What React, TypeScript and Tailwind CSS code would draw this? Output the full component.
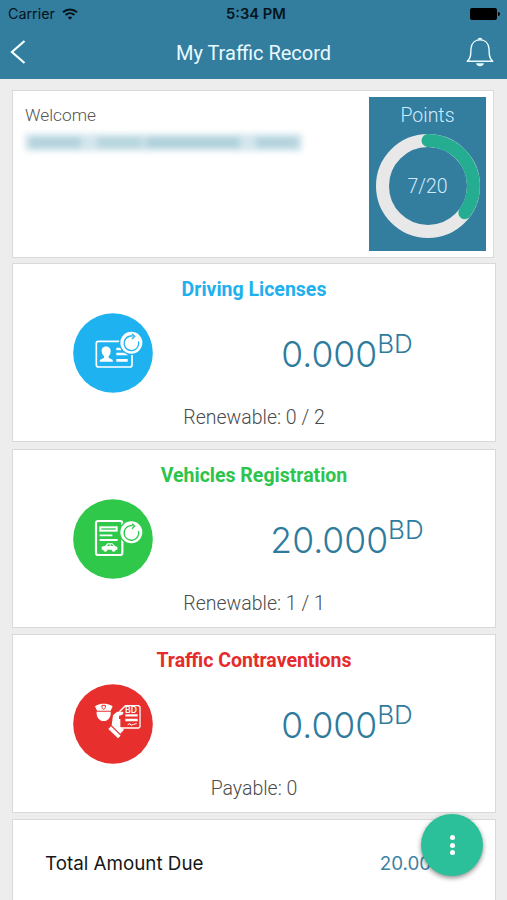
import type { ReactNode } from "react";

type RecordCardProps = {
  title: string;
  titleClass: string;
  amount: string;
  footer: string;
  className?: string;
  icon: ReactNode;
};

function WifiIcon() {
  return (
    <svg viewBox="0 0 16 12" className="ml-[7px] h-3 w-4" fill="none" stroke="#06141c" strokeWidth="2">
      <path d="M1 4.2C5 .5 11 .5 15 4.2" />
      <path d="M3.6 7C6.2 4.7 9.8 4.7 12.4 7" />
      <path d="M8 11.8 5.7 9.2C7 8.1 9 8.1 10.3 9.2Z" fill="#06141c" stroke="none" />
    </svg>
  );
}

function BellIcon() {
  return (
    <svg viewBox="0 0 28 30" className="h-[30px] w-7" fill="none" stroke="#e8fbff" strokeWidth="1.4">
      <path d="M1.2 24.3C5.4 21 4.6 17 5 11.6C5.4 6.2 9 2.7 14 2.7S22.6 6.2 23 11.6C23.4 17 22.6 21 26.8 24.3Z" strokeLinejoin="round" />
      <path d="M12.4 2.4a1.7 1.4 0 0 1 3.2 0" />
      <path d="M10 26.2H18C17.4 30.2 10.6 30.2 10 26.2Z" fill="#e8fbff" stroke="none" />
    </svg>
  );
}

// round arrow badge shared by the renewable cards
function RenewBadge({ color, y }: { color: string; y: number }) {
  return (
    <g transform={`translate(215 ${y})`}>
      <circle r="37" fill={color} />
      <circle r="33" fill="#fff" />
      <path d="M21.5 -4A22 22 0 1 1 -3 -20H4" fill="none" stroke={color} strokeWidth="4" />
      <path d="M2 -26 10 -19 2 -11" fill="none" stroke={color} strokeWidth="4" />
    </g>
  );
}

function LicenseIcon() {
  return (
    <svg viewBox="40 38 240 240" className="size-20">
      <circle cx="160" cy="158" r="119.5" fill="#1fb2f0" />
      <rect x="110" y="123" width="107" height="77" rx="6" fill="none" stroke="#fff" strokeWidth="5" />
      <path d="M126 153C124 134 154 134 153 153C153 160 150 164 147 168V173C153 176 160 176 160 184H120C120 176 128 176 133 173V168C130 164 126 160 126 153Z" fill="#fff" />
      <path d="M170 146H185M170 161H204M170 180H204" stroke="#fff" strokeWidth="8" />
      <RenewBadge color="#1fb2f0" y={127} />
    </svg>
  );
}

function VehicleIcon() {
  return (
    <svg viewBox="40 38 240 240" className="size-20">
      <circle cx="160" cy="158" r="119.5" fill="#2fc84b" />
      <rect x="109" y="104" width="79" height="102" rx="7" fill="none" stroke="#fff" strokeWidth="6.5" />
      <rect x="122" y="123" width="49" height="10" fill="none" stroke="#fff" strokeWidth="6" />
      <path d="M120 147H158M120 161H174" stroke="#fff" strokeWidth="5.5" />
      <path d="M126 181 137 178 143 171H158L166 179 173 182V190H168A6 6 0 0 1 156 190H143A6 6 0 0 1 131 190H126Z" fill="#fff" />
      <path d="M142 179 146 174H150V179ZM153 174H157L162 179H153Z" fill="#2fc84b" />
      <RenewBadge color="#2fc84b" y={138} />
    </svg>
  );
}

function ContraventionIcon() {
  return (
    <svg viewBox="39 28 240 240" className="size-20">
      <circle cx="159" cy="148" r="119.5" fill="#e7302d" />
      <path d="M105 95C115 88 123 87 131 87S148 88 158 95L152 108H111Z" fill="#fff" />
      <path d="M110 111H152C154 127 144 139 131 139S108 127 110 111Z" fill="#fff" />
      <path d="M126 92H136V98C136 101 133 103 131 104C128 103 126 101 126 98Z" fill="none" stroke="#e7302d" strokeWidth="3" />
      <path d="M178 111 196 93H236L240 97V156L236 160H179V133" fill="none" stroke="#fff" strokeWidth="4" />
      <text x="195" y="114" fill="#fff" fontSize="26" fontWeight="600" className="font-['Inter',sans-serif]">BD</text>
      <path d="M196 122H233M196 136H233" stroke="#fff" strokeWidth="7" />
      <path d="M203 150 210 147 213 152 220 149 230 147" fill="none" stroke="#fff" strokeWidth="3" />
      <path d="M159 122 171 111H186C192 111 191 119 186 120L177 124V155L192 165 181 177 155 152Z" fill="#fff" />
      <path d="M153 156 179 183" stroke="#e7302d" strokeWidth="4" />
      <path d="M145 163 153 155 182 183 174 191Z" fill="#fff" />
    </svg>
  );
}

function PointsRing() {
  return (
    <svg viewBox="0 0 106 106" className="size-[106px]">
      <circle cx="53" cy="53" r="45.5" fill="none" stroke="#e8e8e9" strokeWidth="13" />
      <path d="M53 7.5A45.5 45.5 0 0 1 89.8 79.7" fill="none" stroke="#25ad91" strokeWidth="13" strokeLinecap="round" />
    </svg>
  );
}

function RecordCard({ title, titleClass, amount, footer, className, icon }: RecordCardProps) {
  return (
    <section className={`flex h-[179px] w-[484px] flex-col border border-[#d9d9d9] bg-white ${className ?? ""}`}>
      <h2 className={`mt-3 text-center text-[19.5px] leading-[27px] font-bold ${titleClass}`}>{title}</h2>
      <div className="mt-[10px] flex h-20 items-center">
        <div className="ml-[60px] size-20 shrink-0">{icon}</div>
        <div className="ml-[46px] flex flex-1 items-start justify-center pt-[3px] font-['Inter',sans-serif] font-[350] text-[#2f7b9d]">
          <span className="text-[35.5px] leading-[44px]">{amount}</span>
          <span className="-mt-1 text-[26px] leading-[30px]">BD</span>
        </div>
      </div>
      <p className="mt-[13px] text-center text-[19.5px] leading-6 font-light text-[#4b4b4b]">{footer}</p>
    </section>
  );
}

export default function App() {
  return (
    <div className="relative h-[900px] w-[507px] overflow-hidden bg-[#ededed] font-['Roboto',sans-serif]">
      <header className="h-[79px] bg-[#337d9f]">
        <div className="grid h-7 grid-cols-3 items-center pr-[7px] pl-2 font-['Inter',sans-serif] text-[14.3px] text-[#06141c]">
          <div className="flex items-center">
            Carrier
            <WifiIcon />
          </div>
          <span className="pl-1 text-center text-[14.7px] font-semibold">5:34 PM</span>
          <div className="flex items-center justify-end">
            <span className="h-3 w-[27px] rounded-[2px] bg-black" />
            <span className="ml-px h-1 w-[2px] rounded-r bg-black" />
          </div>
        </div>
        <div className="grid h-12 grid-cols-[1fr_auto_1fr] items-center pr-[13px] pl-[10px]">
          <svg viewBox="0 0 16 24" className="h-6 w-4" fill="none" stroke="#f2ffff" strokeWidth="2.2">
            <path d="M14.5 1 2 12 14.5 23" />
          </svg>
          <h1 className="pt-px pl-[3px] text-[20px] text-[#e9faff]">My Traffic Record</h1>
          <div className="flex justify-end">
            <BellIcon />
          </div>
        </div>
      </header>

      <main className="pt-[11px] pl-3">
        <section className="flex h-[168px] w-[482px] justify-between border border-[#d9d9d9] bg-white pt-1.5 pr-[7px] pl-3">
          <div className="pt-1.5">
            <p className="text-[17.3px] leading-6 font-light text-[#555]">Welcome</p>
            {/* name is kept hidden */}
            <div className="mt-[7px] flex h-[17px] w-[277px] gap-1 bg-[#c9e0e8]/80 px-1 py-[3px] blur-[3px]">
              <span className="w-[52px] bg-[#b3d2dc]" />
              <span className="ml-3 w-[45px] bg-[#b6d5dd]" />
              <span className="w-[95px] bg-[#afd0da]" />
              <span className="ml-3 w-[42px] bg-[#b3d2dc]" />
            </div>
          </div>
          <div className="flex h-[154px] w-[117px] flex-col items-center bg-[#337d9f] font-light text-[#cfecff]">
            <span className="mt-[7px] text-[19.5px] leading-6">Points</span>
            <div className="mt-[5px] grid place-items-center">
              <div className="col-start-1 row-start-1">
                <PointsRing />
              </div>
              <span className="col-start-1 row-start-1 pt-px text-[19.5px]">7/20</span>
            </div>
          </div>
        </section>

        <RecordCard
          className="mt-[5px]"
          title="Driving Licenses"
          titleClass="text-[#20b0ed]"
          amount="0.000"
          footer="Renewable: 0 / 2"
          icon={<LicenseIcon />}
        />
        <RecordCard
          className="mt-[7px]"
          title="Vehicles Registration"
          titleClass="text-[#2cc44b]"
          amount="20.000"
          footer="Renewable: 1 / 1"
          icon={<VehicleIcon />}
        />
        <RecordCard
          className="mt-1.5"
          title="Traffic Contraventions"
          titleClass="text-[#e52b2b]"
          amount="0.000"
          footer="Payable: 0"
          icon={<ContraventionIcon />}
        />

        <section className="mt-1.5 flex h-[90px] w-[484px] items-center justify-between border border-[#d9d9d9] bg-white pt-px pr-[52px] pl-8 font-['Inter',sans-serif] text-[18.8px]">
          <span className="text-[#171717]">Total Amount Due</span>
          <span className="text-[#3d82a3]">20.000</span>
        </section>
      </main>

      <button className="absolute top-[814px] left-[421px] flex size-[62px] flex-col items-center justify-center gap-[2.5px] rounded-full bg-[#2bc09a] shadow-[0_2px_5px_rgba(0,0,0,0.45)]">
        <span className="size-[5px] rounded-full bg-white" />
        <span className="size-[5px] rounded-full bg-white" />
        <span className="size-[5px] rounded-full bg-white" />
      </button>
    </div>
  );
}
